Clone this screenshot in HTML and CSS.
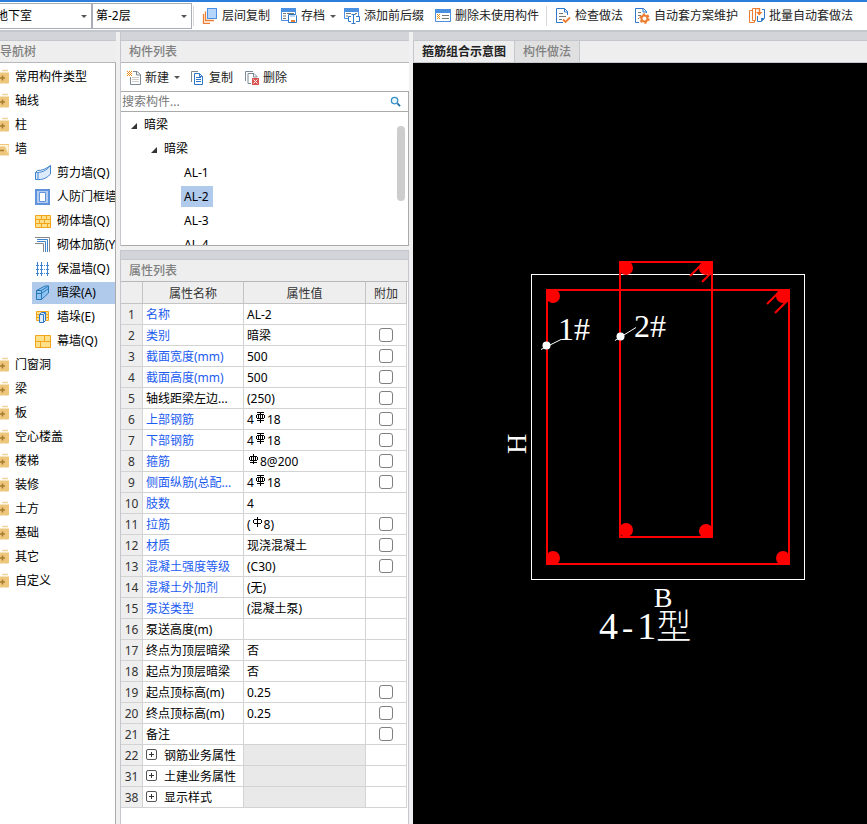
FILE: index.html
```html
<!DOCTYPE html>
<html lang="zh-CN">
<head>
    <meta charset="UTF-8">
    <meta name="viewport" content="width=device-width, initial-scale=1.0">
    <title>构件列表</title>
    <link rel="stylesheet" href="styles.css">
</head>
<body>
    <!-- shared symbols -->
    <svg class="defs" aria-hidden="true">
        <symbol id="folder" viewBox="0 0 16 16">
            <path d="M9 1.500h6" fill="none" stroke="#f3d39a" stroke-width="1.500"/>
            <path d="M0 3.500h16v10a1 1 0 0 1-1 1H0z" fill="#eec67c"/>
            <path d="M9.500 6.500v5M7 9h5" stroke="#a87c30" stroke-width="1.500"/>
        </symbol>
        <symbol id="folder-open" viewBox="0 0 16 16">
            <path d="M6 3.500h10v10H0V5h5z" fill="#fff3d8" stroke="#eec67c"/>
            <path d="M0 5.500h12l4 9H0z" fill="#eec67c"/>
            <path d="M6 9.500h5" stroke="#a87c30" stroke-width="1.500"/>
        </symbol>
        <symbol id="rebar-e" viewBox="0 0 11 11">
            <path d="M2 .5h7M2 8.500h7M5.500 0v11M3.500 2v5M7.500 2v5M2 2.500h7M2 6.500h7M1.500 3v3M9.500 3v3" fill="none" stroke="#000"/>
        </symbol>
        <symbol id="rebar-c" viewBox="0 0 11 11">
            <path d="M2 8.500h7M5.500 0v10M3.500 2v5M7.500 2v5M2 2.500h7M2 6.500h7M1.500 3v3M9.500 3v3" fill="none" stroke="#000"/>
        </symbol>
        <symbol id="rebar-a" viewBox="0 0 11 11">
            <path d="M5.500 0v10M2 2.500h7M2 6.500h7M1.500 3v3M9.500 3v3" fill="none" stroke="#000"/>
        </symbol>
        <symbol id="expand" viewBox="0 0 11 11">
            <rect x=".5" y=".5" width="10" height="10" rx="1.500" fill="#fff" stroke="#555"/>
            <path d="M3 5.500h5M5.500 3v5" stroke="#333"/>
        </symbol>
    </svg>

    <header class="toolbar">
        <div class="selects">
            <label class="combo combo-building"><select aria-label="建筑"><option>地下室</option></select></label>
            <label class="combo"><select aria-label="楼层"><option>第-2层</option></select></label>
        </div>
        <span class="sep"></span>
        <button class="tool">
            <svg viewBox="0 0 16 16" class="icon"><path d="M1.500 6v9.500H8M3.500 3.500v9H12" fill="none" stroke="#ed7d31" stroke-width="1.300"/><rect x="5.500" y=".5" width="9" height="10" fill="#b5d5fb" stroke="#4a90e2"/></svg>
            层间复制
        </button>
        <button class="tool">
            <svg viewBox="0 0 16 16" class="icon"><path d="M.5.500h14v12H.5z" fill="#fff" stroke="#4a90e2"/><path d="M0 0h15v4H0z" fill="#4a90e2"/><path d="M2 5.500h3M6 5.500h7M2 8h3M2 10.500h3" stroke="#777"/><path d="M7.500 6.500h7l1 1v7h-8z" fill="#fff" stroke="#2f78c8"/><path d="M9 7h5v2H9z" fill="#b5d5fb"/><path d="M10 12h4v2h-4z" fill="#ed7d31"/></svg>
            存档 <i class="caret"></i>
        </button>
        <button class="tool">
            <svg viewBox="0 0 16 16" class="icon"><path d="M.5.500h14v10H.5z" fill="#fff" stroke="#4a90e2"/><path d="M0 0h15v4H0z" fill="#4a90e2"/><path d="M2 5.500h5M2 8h2M11 5.500h2" stroke="#777"/><path d="M4.500 8h11v6.500h-11z" fill="#fff"/><path d="M9.500 6v9M7.500 6.500h4M7.500 15.500h4M7 8.500H4.500v5H7M12 13.500h3.500v-5H12" fill="none" stroke="#2f78c8"/></svg>
            添加前后缀
        </button>
        <button class="tool">
            <svg viewBox="0 0 16 16" class="icon"><path d="M.5 1.500h15v12H.5z" fill="#fff" stroke="#4a90e2"/><path d="M0 1h16v4H0z" fill="#4a90e2"/><path d="M2 6.500h1M4 6.500h1M3 7.500h1M2 8.500h1M4 8.500h1M3 9.500h1M2 10.500h1M4 10.500h1" stroke="#e8931c"/><path d="M7 7.500h7M7 10.500h7" stroke="#777"/></svg>
            删除未使用构件
        </button>
        <span class="sep"></span>
        <button class="tool">
            <svg viewBox="0 0 16 16" class="icon"><path d="M9.500.5h-8v14H8M9.500.5l3 3V7M9.500.5V4H13" fill="none" stroke="#2f78c8"/><path d="M4 5.500h4M4 8.500h7M4 11.500h3" stroke="#777"/><path d="M8 11.500l2.500 2.500 4.500-4.500" fill="none" stroke="#ed7d31" stroke-width="1.800"/></svg>
            检查做法
        </button>
        <button class="tool">
            <svg viewBox="0 0 16 16" class="icon"><path d="M9.500.5h-8v14H5M9.500.5l3 3V5M9 .5V4h3.500" fill="none" stroke="#2f78c8"/><path d="M4 4.500h3M4 7.500h3M4 10.500h1" stroke="#777"/><circle cx="10.500" cy="10.500" r="3" fill="none" stroke="#ed7d31" stroke-width="2"/><circle cx="10.500" cy="10.500" r="4.500" fill="none" stroke="#ed7d31" stroke-width="1.500" stroke-dasharray="2.400 2.300"/></svg>
            自动套方案维护
        </button>
        <button class="tool">
            <svg viewBox="0 0 16 16" class="icon"><path d="M3 2.500H.5v12h5v-2" fill="none" stroke="#ed7d31"/><path d="M3.500.5h3v12h-3z" fill="#fff" stroke="#ed7d31"/><path d="M6 .5h4.500V5" fill="none" stroke="#ed7d31" stroke-width="1.500"/><path d="M7 4h6.500L10.300 7.500z" fill="#ed7d31"/><path d="M13 1.500h2.500v9l-3 3h-4V8" fill="none" stroke="#2f78c8"/><path d="M12 13.500V10h3.500z" fill="#2f78c8"/></svg>
            批量自动套做法
        </button>
    </header>

    <main class="workspace">
        <nav class="panel nav-panel">
            <div class="strip"></div>
            <h2 class="title">导航树</h2>
            <ul class="nav-tree">
                <li><svg class="icon"><use href="#folder"/></svg>常用构件类型</li>
                <li><svg class="icon"><use href="#folder"/></svg>轴线</li>
                <li><svg class="icon"><use href="#folder"/></svg>柱</li>
                <li><svg class="icon"><use href="#folder-open"/></svg>墙</li>
                <li class="child"><svg viewBox="0 0 16 16" class="icon"><path d="M.5 7.500C7 7.500 11 6 15.500.5V9C11 13.500 8 15 .5 14.500z" fill="#dceafc" stroke="#3f83cf"/><path d="M.5 7.500l2-2c5 0 8-1.500 13-5M3 8v6" fill="none" stroke="#3f83cf"/></svg>剪力墙(Q)</li>
                <li class="child"><svg viewBox="0 0 16 16" class="icon"><path d="M1 1h13v14H1z" fill="#b5cdf0" stroke="#5f94dc" stroke-width="2"/><path d="M4.500 3.500h6v9h-6z" fill="#fff" stroke="#5f94dc"/></svg>人防门框墙</li>
                <li class="child"><svg viewBox="0 0 16 16" class="icon"><path d="M.5 2.500h15v12H.5z" fill="#ffe08a" stroke="#f2a51a"/><path d="M0 6.500h16M0 10.500h16M6.500 2v4M11.500 2v4M4.500 6v4M9.500 6v4M6.500 11v4M12.500 11v4" stroke="#f2a51a"/></svg>砌体墙(Q)</li>
                <li class="child"><svg viewBox="0 0 16 16" class="icon"><path d="M0 .5h14.500V15M0 6.500h8.500V15" fill="none" stroke="#888"/><path d="M2 2.500h10.500V15M2 4.500h8.500V15" fill="none" stroke="#3f83cf"/></svg>砌体加筋(Y)</li>
                <li class="child"><svg viewBox="0 0 16 16" class="icon"><path d="M2.500 1v14M6.500 1v14M12.500 1v14" stroke="#3f83cf"/><path d="M1 4.500h13M1 8.500h13M1 12.500h13" stroke="#3f83cf" stroke-dasharray="1 1"/></svg>保温墙(Q)</li>
                <li class="child current"><svg viewBox="0 0 16 16" class="icon"><path d="M1.500 5.500L10 1h3.500v7l-7 6.500h-5z" fill="#8fc3f2" stroke="#2878b8"/><path d="M1.500 5.500h5l7-4.500M6.500 5.500v9M1.500 5.500v3h5l7-5" fill="none" stroke="#2878b8"/></svg>暗梁(A)</li>
                <li class="child"><svg viewBox="0 0 16 16" class="icon"><path d="M1.500 2.500h12v9h-12z" fill="#ffe08a" stroke="#f2a51a"/><path d="M1 5.500h13M1 8.500h13" stroke="#f2a51a"/><path d="M4.500 5.500l2-2h4v8l-2 2h-4z" fill="#dceafc" stroke="#2f78c8"/><path d="M8.500 13.500v-8l2-2M4.500 5.500h4" fill="none" stroke="#2f78c8"/></svg>墙垛(E)</li>
                <li class="child"><svg viewBox="0 0 16 16" class="icon"><path d="M.5 2.500h15v12H.5z" fill="#ffe08a" stroke="#f2a51a"/><path d="M0 8.500h16M9.500 2v6M5.500 9v6" stroke="#f2a51a"/></svg>幕墙(Q)</li>
                <li><svg class="icon"><use href="#folder"/></svg>门窗洞</li>
                <li><svg class="icon"><use href="#folder"/></svg>梁</li>
                <li><svg class="icon"><use href="#folder"/></svg>板</li>
                <li><svg class="icon"><use href="#folder"/></svg>空心楼盖</li>
                <li><svg class="icon"><use href="#folder"/></svg>楼梯</li>
                <li><svg class="icon"><use href="#folder"/></svg>装修</li>
                <li><svg class="icon"><use href="#folder"/></svg>土方</li>
                <li><svg class="icon"><use href="#folder"/></svg>基础</li>
                <li><svg class="icon"><use href="#folder"/></svg>其它</li>
                <li><svg class="icon"><use href="#folder"/></svg>自定义</li>
            </ul>
        </nav>

        <div class="middle">
            <section class="panel">
                <div class="strip"></div>
                <h2 class="title">构件列表</h2>
                <div class="list-tools">
                    <button class="tool">
                        <svg viewBox="0 0 14 14" class="icon small"><path d="M6 .5h4l3.500 3v10H3.500V6M9.500.5V4h4" fill="none" stroke="#7b8a94"/><path d="M5 6.500h7M5 8.500h7M5 10.500h7" stroke="#ccc"/><path d="M0 .5h1M2 .5h1M4 .5h1M1 1.500h1M3 1.500h1M0 2.500h1M2 2.500h1M4 2.500h1M1 3.500h1M3 3.500h1M0 4.500h1M2 4.500h1M4 4.500h1" stroke="#f28c1c"/></svg>
                        新建 <i class="caret"></i>
                    </button>
                    <button class="tool">
                        <svg viewBox="0 0 14 14" class="icon small"><path d="M.5 11V.5H7" fill="none" stroke="#7b8a94"/><path d="M3.500 2.500h5l3 3v8h-8zM8.500 2.500v3h3" fill="none" stroke="#2f78c8"/><path d="M5 6.500h5M5 8.500h5M5 10.500h5" stroke="#2f78c8"/></svg>
                        复制
                    </button>
                    <button class="tool">
                        <svg viewBox="0 0 14 14" class="icon small"><path d="M.5 10V.5H8M6 12.500H3V2.500h6l3 3V6M8.500 2.500V6H12" fill="none" stroke="#7b8a94"/><path d="M7 7h7v7H7z" fill="#d9534f"/><path d="M8.500 8.500l4 4M12.500 8.500l-4 4" stroke="#fff"/></svg>
                        删除
                    </button>
                </div>
                <div class="search">
                    <input type="text" placeholder="搜索构件..." aria-label="搜索构件">
                    <svg viewBox="0 0 12 12" class="search-icon"><circle cx="5" cy="5" r="3.500" fill="#eaf5fc" stroke="#3490c8" stroke-width="1.400"/><path d="M8 8l3 3" stroke="#2272a8" stroke-width="2"/></svg>
                </div>
                <div class="component-tree">
                    <ul>
                        <li><i class="arrow"></i>暗梁
                            <ul>
                                <li><i class="arrow"></i>暗梁
                                    <ul>
                                        <li>AL-1</li>
                                        <li><span class="selected">AL-2</span></li>
                                        <li>AL-3</li>
                                        <li>AL-4</li>
                                    </ul>
                                </li>
                            </ul>
                        </li>
                    </ul>
                    <span class="thumb"></span>
                </div>
            </section>

            <section class="panel props-panel">
                <div class="strip strip-top"></div>
                <h2 class="title">属性列表</h2>
                <table class="props">
                    <thead>
                        <tr><th class="num"></th><th class="name">属性名称</th><th class="value">属性值</th><th class="extra">附加</th></tr>
                    </thead>
                    <tbody>
                        <tr><th>1</th><td class="blue">名称</td><td>AL-2</td><td></td></tr>
                        <tr><th>2</th><td class="blue">类别</td><td>暗梁</td><td><input type="checkbox" aria-label="附加 类别"></td></tr>
                        <tr><th>3</th><td class="blue">截面宽度(mm)</td><td>500</td><td><input type="checkbox" aria-label="附加 截面宽度"></td></tr>
                        <tr><th>4</th><td class="blue">截面高度(mm)</td><td>500</td><td><input type="checkbox" aria-label="附加 截面高度"></td></tr>
                        <tr><th>5</th><td>轴线距梁左边...</td><td>(250)</td><td><input type="checkbox" aria-label="附加 轴线距梁左边"></td></tr>
                        <tr><th>6</th><td class="blue">上部钢筋</td><td>4<svg class="rebar"><use href="#rebar-e"/></svg>18</td><td><input type="checkbox" aria-label="附加 上部钢筋"></td></tr>
                        <tr><th>7</th><td class="blue">下部钢筋</td><td>4<svg class="rebar"><use href="#rebar-e"/></svg>18</td><td><input type="checkbox" aria-label="附加 下部钢筋"></td></tr>
                        <tr><th>8</th><td class="blue">箍筋</td><td><svg class="rebar"><use href="#rebar-c"/></svg>8@200</td><td><input type="checkbox" aria-label="附加 箍筋"></td></tr>
                        <tr><th>9</th><td class="blue">侧面纵筋(总配...</td><td>4<svg class="rebar"><use href="#rebar-e"/></svg>18</td><td><input type="checkbox" aria-label="附加 侧面纵筋"></td></tr>
                        <tr><th>10</th><td class="blue">肢数</td><td>4</td><td></td></tr>
                        <tr><th>11</th><td class="blue">拉筋</td><td>(<svg class="rebar"><use href="#rebar-a"/></svg>8)</td><td><input type="checkbox" aria-label="附加 拉筋"></td></tr>
                        <tr><th>12</th><td class="blue">材质</td><td>现浇混凝土</td><td><input type="checkbox" aria-label="附加 材质"></td></tr>
                        <tr><th>13</th><td class="blue">混凝土强度等级</td><td>(C30)</td><td><input type="checkbox" aria-label="附加 混凝土强度等级"></td></tr>
                        <tr><th>14</th><td class="blue">混凝土外加剂</td><td>(无)</td><td></td></tr>
                        <tr><th>15</th><td class="blue">泵送类型</td><td>(混凝土泵)</td><td></td></tr>
                        <tr><th>16</th><td>泵送高度(m)</td><td></td><td></td></tr>
                        <tr><th>17</th><td>终点为顶层暗梁</td><td>否</td><td></td></tr>
                        <tr><th>18</th><td>起点为顶层暗梁</td><td>否</td><td></td></tr>
                        <tr><th>19</th><td>起点顶标高(m)</td><td>0.25</td><td><input type="checkbox" aria-label="附加 起点顶标高"></td></tr>
                        <tr><th>20</th><td>终点顶标高(m)</td><td>0.25</td><td><input type="checkbox" aria-label="附加 终点顶标高"></td></tr>
                        <tr><th>21</th><td>备注</td><td></td><td><input type="checkbox" aria-label="附加 备注"></td></tr>
                        <tr><th>22</th><td><button class="expand" aria-label="展开"><svg><use href="#expand"/></svg></button>钢筋业务属性</td><td class="off"></td><td></td></tr>
                        <tr><th>31</th><td><button class="expand" aria-label="展开"><svg><use href="#expand"/></svg></button>土建业务属性</td><td class="off"></td><td></td></tr>
                        <tr><th>38</th><td><button class="expand" aria-label="展开"><svg><use href="#expand"/></svg></button>显示样式</td><td class="off"></td><td></td></tr>
                    </tbody>
                </table>
            </section>
        </div>

        <section class="viewer">
            <div class="strip"></div>
            <div class="tabs">
                <button class="tab active">箍筋组合示意图</button>
                <button class="tab">构件做法</button>
            </div>
            <div class="canvas">
                <svg viewBox="413 63 454 761" class="drawing">
                    <!-- concrete section -->
                    <rect x="531.5" y="274.5" width="273" height="305" class="outline"/>
                    <!-- stirrups -->
                    <rect x="547" y="290" width="242" height="274" class="stirrup"/>
                    <rect x="620" y="262" width="92" height="275" class="stirrup"/>
                    <path d="M690 276l13-13M702 282l10-10M767 304l13-13M775 313l13-13" class="stirrup"/>
                    <g fill="#f00">
                        <circle cx="626" cy="268" r="7"/>
                        <circle cx="706" cy="268" r="7"/>
                        <circle cx="553" cy="296" r="7"/>
                        <circle cx="783" cy="296" r="7"/>
                        <circle cx="626" cy="530" r="7"/>
                        <circle cx="706" cy="531" r="7"/>
                        <circle cx="553" cy="558" r="7"/>
                        <circle cx="783" cy="558" r="7"/>
                    </g>
                    <!-- leaders -->
                    <path d="M541 349.500l20-10M615 340.500l21-13" class="outline"/>
                    <circle cx="546.5" cy="345.5" r="4" fill="#fff"/>
                    <circle cx="620.5" cy="336.500" r="4" fill="#fff"/>
                    <text x="558" y="340" class="mark">1#</text>
                    <text x="634" y="337" class="mark">2#</text>
                    <text x="663" y="607" class="dim">B</text>
                    <text transform="translate(526 444) rotate(-90)" class="dim">H</text>
                    <text x="599" y="639" class="caption">4<tspan class="dash">-</tspan>1<tspan class="cjk">型</tspan></text>
                </svg>
            </div>
        </section>
    </main>
</body>
</html>
```
FILE: styles.css
```css
* {
    box-sizing: border-box;
}
body {
    margin: 0;
    min-height: 100vh;
    display: flex;
    flex-direction: column;
    overflow-x: hidden;
    background: #f0f0f0;
    color: #000;
    font-family: "Noto Sans", "Noto Sans CJK SC", sans-serif;
    font-size: 12px;
    line-height: 20px;
}
button, input, select {
    font: inherit;
    color: inherit;
}
ul {
    list-style: none;
    margin: 0;
    padding: 0;
}
.defs {
    display: none;
}
.icon {
    width: 16px;
    height: 16px;
    flex: none;
}
.icon.small {
    width: 14px;
    height: 14px;
}

/* Top toolbar */
.toolbar {
    display: flex;
    align-items: center;
    gap: 3px;
    height: 32px;
    background: #fff;
    border-top: 2px solid #2d7ddc;
    border-bottom: 2px solid #c4c7cc;
    white-space: nowrap;
}
.selects {
    display: flex;
    margin-left: -8px;
    margin-right: -2px;
}
.combo {
    position: relative;
    width: 100px;
}
.combo select {
    appearance: none;
    width: 100%;
    height: 26px;
    padding: 0 3px;
    border: 1px solid #a9adb8;
    border-radius: 0;
    background: #fff;
    display: block;
}
.combo::after {
    content: "";
    position: absolute;
    right: 5px;
    top: 12px;
    border: 3px solid transparent;
    border-top-color: #555;
    border-bottom: 0;
    pointer-events: none;
}
.sep {
    width: 1px;
    height: 20px;
    margin-right: 1px;
    background: #d8d8d8;
}
.tool {
    display: flex;
    align-items: center;
    gap: 4px;
    padding: 0 4px;
    height: 22px;
    border: 0;
    border-radius: 3px;
    background: none;
    color: #222;
    flex: none;
}
.tool:hover {
    background: #e5f0fc;
}
.caret {
    margin-left: 1px;
    margin-right: -3px;
    border: 3px solid transparent;
    border-top-color: #555;
    border-bottom: 0;
}

/* Panels */
.workspace {
    flex: 1;
    display: grid;
    grid-template-columns: 116px 289px minmax(0, 1fr);
    gap: 4px;
}
.strip {
    height: 9px;
    background: #d3d4da;
    border-bottom: 1px solid #c4c7cc;
}
.strip-top {
    height: 10px;
    border-top: 1px solid #c4c7cc;
}
.title {
    height: 22px;
    margin: 0;
    padding-left: 8px;
    background: #eee;
    border-bottom: 1px solid #b6b8bc;
    color: #808080;
    font-size: 12px;
    font-weight: 500;
    line-height: 22px;
}
.nav-panel {
    display: flex;
    flex-direction: column;
    overflow: hidden;
}
.nav-panel .title {
    padding-left: 0;
}
.nav-tree {
    flex: 1;
    display: flex;
    flex-direction: column;
    padding-top: 2px;
    background: #fff;
    border-right: 1px solid #aaa;
    overflow: hidden;
}
.nav-tree li {
    display: flex;
    align-items: center;
    gap: 6px;
    height: 24px;
    margin-left: -7px;
    white-space: nowrap;
}
.nav-tree .child {
    height: 22px;
    margin: 1px 0 1px 32px;
    padding-left: 3px;
}
.nav-tree .current {
    background: #b0caec;
}

/* Component list */
.middle {
    display: flex;
    flex-direction: column;
    gap: 4px;
}
.middle .panel {
    border-left: 1px solid #c4c7cc;
}
.list-tools {
    display: flex;
    align-items: center;
    gap: 4px;
    height: 28px;
    padding-top: 1px;
    padding-left: 2px;
    background: #fff;
}
.list-tools .caret {
    margin-right: -1px;
}
.search {
    display: flex;
    align-items: center;
    height: 21px;
    padding-right: 7px;
    background: #fff;
    border: 1px solid #aaa;
    border-width: 1px 1px 1px 0;
}
.search input {
    flex: 1;
    min-width: 0;
    height: 18px;
    padding: 0 1px;
    border: 0;
    outline: 0;
    background: none;
}
.search input::placeholder {
    color: #777;
}
.search-icon {
    width: 11px;
    height: 11px;
}
.component-tree {
    position: relative;
    height: 134px;
    padding-top: 1px;
    background: #fff;
    border: 1px solid #aaa;
    border-top: 0;
    border-left: 0;
    overflow: hidden;
    line-height: 24px;
}
.component-tree li {
    padding-left: 23px;
}
.component-tree li li {
    padding-left: 20px;
}
.arrow {
    display: inline-block;
    width: 6px;
    height: 6px;
    margin-left: -13px;
    margin-right: 7px;
    background: #333;
    clip-path: polygon(100% 0, 100% 100%, 0 100%);
}
.selected {
    display: inline-block;
    height: 21px;
    margin-left: -3px;
    padding: 0 4px 0 3px;
    background: #b0caec;
    line-height: 21px;
}
.thumb {
    position: absolute;
    top: 14px;
    right: 3px;
    width: 8px;
    height: 75px;
    border-radius: 4px;
    background: #cdcdcd;
}

/* Property table */
.props-panel {
    flex: 1;
    background: #fff;
    border-right: 1px solid #c4c7cc;
}
.props {
    width: 286px;
    table-layout: fixed;
    border-collapse: separate;
    border-spacing: 0;
}
.props th, .props td {
    height: 21px;
    padding: 2px 0 0;
    border-right: 1px solid #d3d3d3;
    border-bottom: 1px solid #d3d3d3;
    line-height: 18px;
    white-space: nowrap;
}
.props th {
    background: #eee;
    color: #333;
    font-weight: 400;
    text-align: center;
}
.props thead th {
    height: 22px;
    border-color: #c4c4c4;
}
.props .num {
    width: 22px;
}
.props .name {
    width: 101px;
}
.props .value {
    width: 122px;
}
.props td {
    padding-left: 3px;
}
.props td:last-child {
    padding: 0;
    text-align: center;
}
.props .blue {
    color: #1c5cf0;
}
.props .off {
    background: #e9e9e9;
}
.props input {
    appearance: none;
    display: block;
    width: 14px;
    height: 14px;
    margin: 0 auto;
    border: 1px solid #808080;
    border-radius: 3px;
    background: #fff;
}
.props input:checked {
    background: #2d7ddc;
}
.rebar {
    width: 11px;
    height: 11px;
    margin: 0 1px;
    vertical-align: 1px;
}
.expand {
    width: 11px;
    height: 11px;
    margin-right: 7px;
    padding: 0;
    border: 0;
    background: none;
    vertical-align: 0;
}
.expand svg {
    display: block;
    width: 11px;
    height: 11px;
}

/* Drawing */
.viewer {
    display: flex;
    flex-direction: column;
}
.tabs {
    display: flex;
    height: 22px;
    background: #eee;
    border-left: 1px solid #c4c7cc;
    border-bottom: 1px solid #c4c7cc;
}
.tab {
    padding: 0 8px;
    border: 0;
    border-right: 1px solid #c4c7cc;
    background: #e0e0e0;
    color: #808080;
    font-weight: 500;
}
.tab.active {
    background: #eee;
    color: #222;
    font-weight: 700;
}
.canvas {
    flex: 1;
    display: flex;
    background: #000;
}
.drawing {
    width: 100%;
    flex: 1;
}
.outline {
    fill: none;
    stroke: #fff;
}
.stirrup {
    fill: none;
    stroke: #f00;
    stroke-width: 2px;
}
.drawing text {
    fill: #fff;
    font-family: "Liberation Serif", "Noto Sans CJK SC", serif;
}
.mark {
    font-size: 32px;
}
.dim {
    font-size: 28px;
    text-anchor: middle;
}
.caption {
    font-size: 38px;
}
.dash {
    font-family: "Liberation Mono", monospace;
    font-size: 32px;
}
.cjk {
    font-size: 35px;
    font-weight: 300;
}
```
